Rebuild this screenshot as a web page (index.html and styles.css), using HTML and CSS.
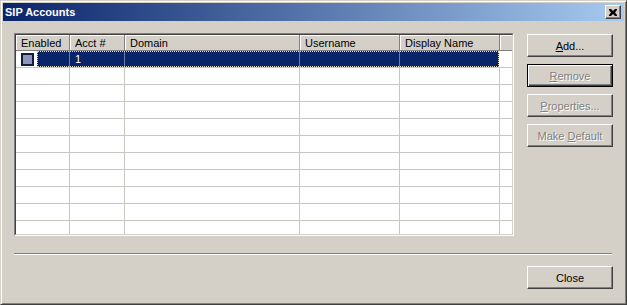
FILE: index.html
```html
<!DOCTYPE html>
<html lang="en">
  <head>
    <meta charset="UTF-8" />
    <title>SIP Accounts</title>
    <link rel="stylesheet" href="styles.css">
  </head>
  <body>
    <div class="window">
      <div class="titlebar">
        <span class="title">SIP Accounts</span>
        <div class="close-x">
          <svg width="8" height="7" viewBox="0 0 8 7">
            <path d="M0 0h2l2 2 2-2h2v1l-2 2.5 2 2.5v1h-2l-2-2-2 2h-2v-1l2-2.5-2-2.5z" fill="#000"/>
          </svg>
        </div>
      </div>

      <div class="content">
        <div class="main">
          <div class="listview">
            <div class="listview-inner">
              <div class="header">
                <div class="hcell col-enabled">Enabled</div>
                <div class="hcell col-acct">Acct #</div>
                <div class="hcell col-domain">Domain</div>
                <div class="hcell col-user">Username</div>
                <div class="hcell col-display">Display Name</div>
                <div class="hcell col-fill"></div>
              </div>

              <div class="row">
                <div class="check-area"><span class="checkbox"></span></div>
                <div class="selection">
                  <div class="cell col-label"></div>
                  <div class="cell col-acct">1</div>
                  <div class="cell col-domain"></div>
                  <div class="cell col-user"></div>
                  <div class="cell col-display"></div>
                </div>
                <div class="cell col-fill"></div>
              </div>

              <div id="rows"></div>
            </div>
          </div>

          <div class="buttons">
            <button class="btn"><u>A</u>dd...</button>
            <button class="btn focused" disabled><u>R</u>emove</button>
            <button class="btn" disabled><u>P</u>roperties...</button>
            <button class="btn" disabled>Make <u>D</u>efault</button>
          </div>
        </div>

        <div class="separator"></div>

        <div class="footer">
          <button class="btn">Close</button>
        </div>
      </div>
    </div>

    <script>
      const rows = document.getElementById("rows");
      for (let i = 0; i < 10; i++) {
        rows.innerHTML += `
          <div class="row">
            <div class="cell col-enabled"></div>
            <div class="cell col-acct"></div>
            <div class="cell col-domain"></div>
            <div class="cell col-user"></div>
            <div class="cell col-display"></div>
            <div class="cell col-fill"></div>
          </div>`;
      }
    </script>
  </body>
</html>
```

FILE: styles.css
```css
* {
  box-sizing: border-box;
}

body {
  margin: 0;
  background: #d4d0c8;
  font-family: "Liberation Sans", Arial, sans-serif;
  font-size: 11px;
  color: #000;
}

.window {
  width: 627px;
  height: 305px;
  display: flex;
  flex-direction: column;
  background: #d4d0c8;
  border: 1px solid;
  border-color: #d4d0c8 #404040 #404040 #d4d0c8;
  padding: 2px;
  box-shadow: inset 1px 1px #fff, inset -1px -1px #808080;
}

.titlebar {
  height: 18px;
  display: flex;
  align-items: center;
  justify-content: space-between;
  padding: 0 3px 0 2px;
  background: linear-gradient(to right, #0a246a, #a6caf0);
  color: #fff;
  font-weight: bold;
  font-size: 11px;
}

.close-x {
  width: 16px;
  height: 14px;
  display: flex;
  align-items: center;
  justify-content: center;
  background: #d4d0c8;
  border: 1px solid;
  border-color: #fff #404040 #404040 #fff;
  box-shadow: inset -1px -1px #808080;
}

.content {
  flex: 1;
  padding: 12px 11px 0 11px;
}

.main {
  display: flex;
  gap: 13px;
}

.listview {
  width: 500px;
  height: 203px;
  border: 1px solid;
  border-color: #808080 #fff #fff #808080;
  background: #fff;
}

.listview-inner {
  height: 100%;
  overflow: hidden;
  border: 1px solid;
  border-color: #404040 #d4d0c8 #d4d0c8 #404040;
}

.header {
  display: flex;
  height: 16px;
}

.hcell {
  height: 16px;
  padding: 2px 0 0 5px;
  line-height: 12px;
  background: #d4d0c8;
  border-right: 1px solid #808080;
  border-bottom: 1px solid #808080;
  box-shadow: inset 1px 1px #fff;
  white-space: nowrap;
}

.row {
  display: flex;
  height: 17px;
  border-bottom: 1px solid #c8c6c0;
}

.cell {
  height: 16px;
  padding: 2px 0 0 5px;
  line-height: 12px;
  border-right: 1px solid #c8c6c0;
}

.col-enabled { width: 54px; }
.col-acct { width: 55px; }
.col-domain { width: 175px; }
.col-user { width: 100px; }
.col-display { width: 100px; }
.col-label { width: 33px; }
.col-fill { width: 12px; border-right: none; }

.check-area {
  width: 21px;
  height: 16px;
  padding: 2px 0 0 5px;
}

.checkbox {
  display: block;
  width: 13px;
  height: 13px;
  background: #8d95bd;
  border: 2px solid #141c3c;
}

.selection {
  display: flex;
  background: #0a246a;
  color: #fff;
  outline: 1px dotted #d8d8c0;
  outline-offset: -1px;
}

.selection .cell {
  border-right-color: #6a7ca8;
}

.selection .col-display {
  border-right: none;
  width: 99px;
}

.buttons {
  display: flex;
  flex-direction: column;
  gap: 7px;
  margin-top: 1px;
}

.btn {
  width: 86px;
  height: 23px;
  padding: 0;
  font: inherit;
  color: #000;
  background: #d4d0c8;
  border: 1px solid;
  border-color: #fff #404040 #404040 #fff;
  box-shadow: inset -1px -1px #808080;
}

.btn:disabled {
  color: #808080;
  text-shadow: 1px 1px #fff;
}

.btn.focused {
  border: 1px solid #000;
  box-shadow: inset 1px 1px #fff, inset -1px -1px #404040, inset -2px -2px #808080;
}

.separator {
  margin: 17px 1px 0 0;
  height: 2px;
  border-top: 1px solid #808080;
  border-bottom: 1px solid #fff;
}

.footer {
  display: flex;
  justify-content: flex-end;
  margin-top: 11px;
}
```
